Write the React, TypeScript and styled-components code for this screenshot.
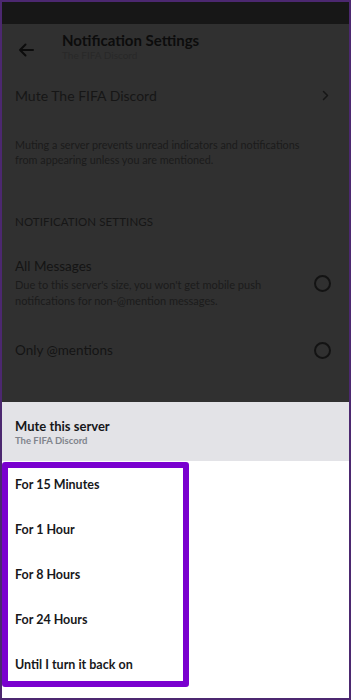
import styled, { createGlobalStyle } from 'styled-components';

const GlobalStyle = createGlobalStyle`
  html, body {
    margin: 0;
    padding: 0;
    background: #ffffff;
  }
  * {
    box-sizing: border-box;
  }
`;

const Frame = styled.div`
  width: 351px;
  height: 700px;
  border: 2px solid #4c2870;
  display: flex;
  flex-direction: column;
  overflow: hidden;
  font-family: Lato, 'Noto Sans', sans-serif;
`;

const StatusBar = styled.div`
  height: 22px;
  flex: none;
  background: #171717;
`;

const Page = styled.div`
  flex: 1;
  min-height: 0;
  overflow: hidden;
  background: #303030;
  color: #131313;
`;

const Header = styled.div`
  height: 48px;
  display: flex;
  align-items: center;
  padding-left: 16px;
`;

const BackButton = styled.div`
  width: 44px;
  display: flex;
  align-items: center;
  margin-top: 4px;
`;

const TitleBlock = styled.div`
  display: flex;
  flex-direction: column;
  margin-top: -4px;
`;

const Title = styled.div`
  font-size: 15px;
  font-weight: 700;
  line-height: 18px;
  color: #0c0c0c;
`;

const Subtitle = styled.div`
  font-size: 10px;
  line-height: 13px;
  color: #282828;
`;

const NavRow = styled.div`
  height: 46px;
  display: flex;
  align-items: center;
  justify-content: space-between;
  padding: 0 20px 0 13px;
  font-size: 14px;
  color: #161616;
`;

const Note = styled.p`
  margin: 19px 0 0;
  padding: 0 32px 0 13px;
  font-size: 10.8px;
  line-height: 15px;
  color: #1b1b1b;
`;

const SectionLabel = styled.div`
  margin-top: 47px;
  padding: 0 13px;
  font-size: 11.5px;
  line-height: 16px;
  letter-spacing: 0.1px;
  color: #161616;
`;

const OptionRow = styled.div<{ $gap: number }>`
  margin-top: ${(p) => p.$gap}px;
  display: flex;
  align-items: center;
  justify-content: space-between;
  padding: 0 18px 0 13px;
`;

const OptionText = styled.div`
  display: flex;
  flex-direction: column;
`;

const OptionLabel = styled.div`
  font-size: 13.5px;
  line-height: 18px;
  color: #141414;
`;

const OptionHint = styled.div`
  margin-top: 2px;
  font-size: 11px;
  line-height: 16px;
  color: #1b1b1b;
  max-width: 270px;
`;

const Radio = styled.div<{ $checked?: boolean }>`
  width: 17px;
  height: 17px;
  border-radius: 50%;
  border: 2px solid ${(p) => (p.$checked ? '#1b2233' : '#131313')};
  flex: none;
`;

const Sheet = styled.div`
  height: 296px;
  flex: none;
  background: #ffffff;
  display: flex;
  flex-direction: column;
`;

const SheetHeader = styled.div`
  height: 59px;
  background: #e3e3e7;
  padding: 16px 13px 0;
`;

const SheetTitle = styled.div`
  font-size: 13px;
  font-weight: 700;
  line-height: 16px;
  color: #16171a;
`;

const SheetSub = styled.div`
  font-size: 9.5px;
  font-weight: 700;
  line-height: 14px;
  color: #80848c;
`;

const Highlight = styled.div`
  width: 187px;
  margin-top: 1px;
  border: 6px solid #7a00cf;
  border-radius: 3px;
  padding: 0 0 1px 7px;
  display: flex;
  flex-direction: column;
  gap: 13px;
  background: #ffffff;
`;

const DurationItem = styled.div`
  height: 32px;
  display: flex;
  align-items: center;
  font-size: 12.5px;
  font-weight: 700;
  color: #17181b;
`;

const durations = ['For 15 Minutes', 'For 1 Hour', 'For 8 Hours', 'For 24 Hours', 'Until I turn it back on'];

const App = () => {
  return (
    <>
      <GlobalStyle />
      <Frame>
        <StatusBar />
        <Page>
          <Header>
            <BackButton>
              <svg width="16" height="14" viewBox="0 0 16 14" fill="none">
                <path d="M15 7H2M7.5 1.5L2 7l5.5 5.5" stroke="#0c0c0c" strokeWidth="2" strokeLinecap="round" strokeLinejoin="round" />
              </svg>
            </BackButton>
            <TitleBlock>
              <Title>Notification Settings</Title>
              <Subtitle>The FIFA Discord</Subtitle>
            </TitleBlock>
          </Header>
          <NavRow>
            <span>Mute The FIFA Discord</span>
            <svg width="7" height="11" viewBox="0 0 7 11" fill="none">
              <path d="M1.5 1.5l4 4-4 4" stroke="#161616" strokeWidth="1.5" strokeLinecap="round" strokeLinejoin="round" />
            </svg>
          </NavRow>
          <Note>
            Muting a server prevents unread indicators and notifications from appearing unless you are mentioned.
          </Note>
          <SectionLabel>NOTIFICATION SETTINGS</SectionLabel>
          <OptionRow $gap={27}>
            <OptionText>
              <OptionLabel>All Messages</OptionLabel>
              <OptionHint>Due to this server's size, you won't get mobile push notifications for non-@mention messages.</OptionHint>
            </OptionText>
            <Radio />
          </OptionRow>
          <OptionRow $gap={32}>
            <OptionText>
              <OptionLabel>Only @mentions</OptionLabel>
            </OptionText>
            <Radio />
          </OptionRow>
          <OptionRow $gap={42}>
            <OptionText>
              <OptionLabel>Nothing</OptionLabel>
            </OptionText>
            <Radio $checked />
          </OptionRow>
        </Page>
        <Sheet>
          <SheetHeader>
            <SheetTitle>Mute this server</SheetTitle>
            <SheetSub>The FIFA Discord</SheetSub>
          </SheetHeader>
          <Highlight>
            {durations.map((d) => (
              <DurationItem key={d}>{d}</DurationItem>
            ))}
          </Highlight>
        </Sheet>
      </Frame>
    </>
  );
};

export default App;
